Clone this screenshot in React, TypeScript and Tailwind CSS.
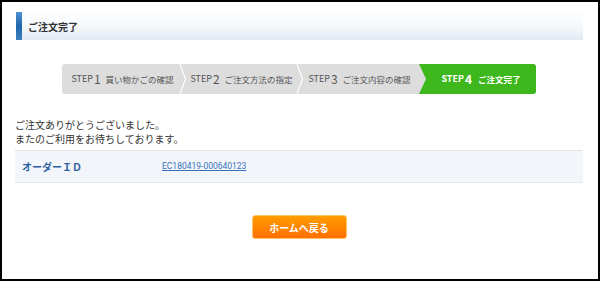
export default function App() {
  const steps = [
    { n: "1", label: "買い物かごの確認", w: "w-[121px]" },
    { n: "2", label: "ご注文方法の指定", w: "w-[117px]" },
    { n: "3", label: "ご注文内容の確認", w: "w-[119px]" },
    { n: "4", label: "ご注文完了", w: "flex-1", active: true },
  ];
  return (
    <div className="box-border w-[600px] h-[281px] border-2 border-black bg-white pl-[13px] pr-[15px] pt-[10px] font-['Noto_Sans_CJK_JP','Noto_Sans',sans-serif]">
      <div className="ml-[1px] h-[28px] flex items-stretch bg-linear-to-b from-[#fdfeff] via-[#f6f9fc] to-[#e1eaf3]">
        <div className="w-[6px] bg-linear-to-b from-[#4d92d2] via-[#1f67ab] to-[#3b7fc0]" />
        <div className="ml-[6px] flex items-center text-[10px] font-bold text-[#333]">ご注文完了</div>
      </div>

      <div className="mt-[24px] mx-auto w-[474px] h-[30px] flex bg-[#dddddd] rounded-[3px]">
        {steps.map((s, i) =>
          s.active ? (
            <div
              key={i}
              className={`${s.w} relative flex items-center justify-center pl-[7px] bg-[#3db71b] text-white font-bold rounded-r-[3px] [clip-path:polygon(0_0,100%_0,100%_100%,0_100%,7px_50%)]`}
            >
              <span className="text-[9px]">STEP</span>
              <span className="text-[12px] leading-none ml-[1px]">{s.n}</span>
              <span className="text-[8.5px] ml-[6px]">{s.label}</span>
            </div>
          ) : (
            <div key={i} className={`${s.w} relative flex items-center justify-center text-[#555]`}>
              <span className="text-[9px]">STEP</span>
              <span className="text-[12px] leading-none ml-[1px]">{s.n}</span>
              <span className="text-[8.5px] ml-[5px]">{s.label}</span>
              {i < 2 && (
                <svg className="absolute right-[-4px] top-0 h-[30px] w-[8px]" viewBox="0 0 8 30">
                  <polyline points="1,0 6.5,15 1,30" fill="none" stroke="#ffffff" strokeWidth="1.2" />
                </svg>
              )}
            </div>
          )
        )}
      </div>

      <div className="mt-[24px] text-[10px] leading-[14px] text-[#333]">
        <p>ご注文ありがとうございました。</p>
        <p>またのご利用をお待ちしております。</p>
      </div>

      <div className="mt-[4px] h-[33px] flex items-center bg-[#f2f6fa] border-t border-b border-[#e3e7eb]">
        <div className="pl-[7px] w-[147px] text-[10px] font-bold text-[#2d5f9f]">オーダーＩＤ</div>
        <a href="#" className="text-[8.5px] text-[#3a72b8] underline font-['Roboto',sans-serif]">
          EC180419-000640123
        </a>
      </div>

      <div className="mt-[32px] flex justify-center">
        <button className="w-[95px] h-[24px] rounded-[3px] border border-[#ffc46a] bg-linear-to-b from-[#ff9d00] to-[#ff6e00] text-white text-[10px] font-bold flex items-center justify-center">
          ホームへ戻る
        </button>
      </div>
    </div>
  );
}
